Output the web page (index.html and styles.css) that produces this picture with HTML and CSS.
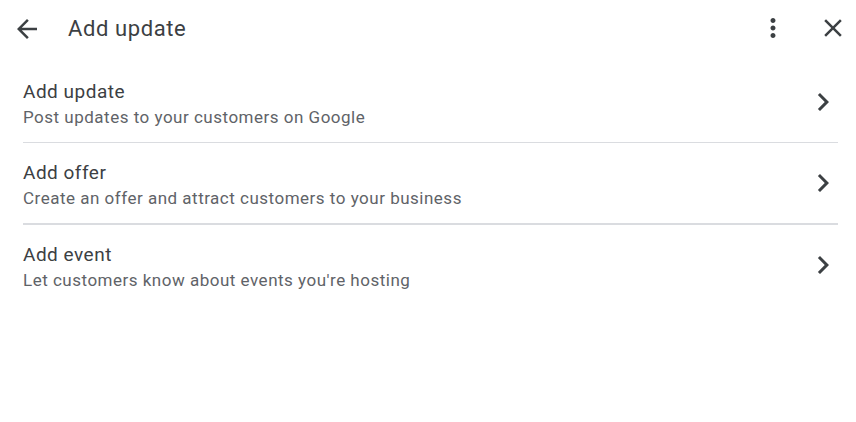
FILE: index.html
```html
<!DOCTYPE html>
<html lang="en">
<head>
  <meta charset="UTF-8">
  <title>Add update</title>
  <link rel="stylesheet" href="styles.css">
</head>
<body>
  <div class="header">
    <button class="icon-btn back" title="Back">
      <svg viewBox="0 0 24 24" width="30" height="30"><path d="M20 11H7.830l5.59-5.59L12 4l-8 8 8 8 1.41-1.41L7.83 13H20v-2z"/></svg>
    </button>
    <h1 class="title">Add update</h1>
    <button class="icon-btn more" title="More">
      <svg viewBox="0 0 24 24" width="30" height="30"><path d="M12 8c1.1 0 2-.9 2-2s-.9-2-2-2-2 .9-2 2 .9 2 2 2zm0 2c-1.1 0-2 .9-2 2s.9 2 2 2 2-.9 2-2-.9-2-2-2zm0 6c-1.1 0-2 .9-2 2s.9 2 2 2 2-.9 2-2-.9-2-2-2z"/></svg>
    </button>
    <button class="icon-btn close" title="Close">
      <svg viewBox="0 0 24 24" width="30" height="30"><path d="M19 6.41L17.59 5 12 10.59 6.41 5 5 6.41 10.59 12 5 17.59 6.41 19 12 13.41 17.59 19 19 17.59 13.41 12z"/></svg>
    </button>
  </div>

  <div class="list">
    <div class="row">
      <div class="text">
        <div class="row-title">Add update</div>
        <div class="row-sub">Post updates to your customers on Google</div>
      </div>
      <svg class="chev" viewBox="0 0 24 24" width="36" height="36"><path d="M10 6L8.59 7.41 13.17 12l-4.58 4.59L10 18l6-6z"/></svg>
    </div>
    <div class="row thick">
      <div class="text">
        <div class="row-title">Add offer</div>
        <div class="row-sub">Create an offer and attract customers to your business</div>
      </div>
      <svg class="chev" viewBox="0 0 24 24" width="36" height="36"><path d="M10 6L8.59 7.41 13.17 12l-4.58 4.59L10 18l6-6z"/></svg>
    </div>
    <div class="row last">
      <div class="text">
        <div class="row-title">Add event</div>
        <div class="row-sub">Let customers know about events you're hosting</div>
      </div>
      <svg class="chev" viewBox="0 0 24 24" width="36" height="36"><path d="M10 6L8.59 7.41 13.17 12l-4.58 4.59L10 18l6-6z"/></svg>
    </div>
  </div>
</body>
</html>
```

FILE: styles.css
```css
body { margin: 0; font-family: Roboto, "Noto Sans", Arial, sans-serif; background: #fff; color: #3c4043; }

.header { display: flex; align-items: center; height: 56px; padding: 0 8px 0 12px; }
.icon-btn {
  width: 30px; height: 30px; padding: 0; border: none; background: none;
  display: flex; align-items: center; justify-content: center; fill: #3c4043;
}
.back { margin-top: 2px; }
.title { flex: 1; margin: 0 0 0 26px; font-size: 22px; letter-spacing: 0.6px; font-weight: 400; color: #3c4043; }
.more { margin-right: 30px; }

.list { padding: 6px 18px 0 23px; }
.row {
  display: flex; align-items: center; padding: 18px 0 15px;
  border-bottom: 1px solid #dadce0;
}
.row.thick { border-bottom: 2px solid #dadce0; }
.row.last { border-bottom: none; }
.text { flex: 1; }
.row-title { font-size: 19px; letter-spacing: 0.5px; line-height: 24px; color: #3c4043; }
.row-sub { font-size: 17px; letter-spacing: 0.5px; line-height: 20px; margin-top: 3px; color: #5f6368; }
.chev { fill: #3c4043; margin: -3px -3px 0 0; }
```
